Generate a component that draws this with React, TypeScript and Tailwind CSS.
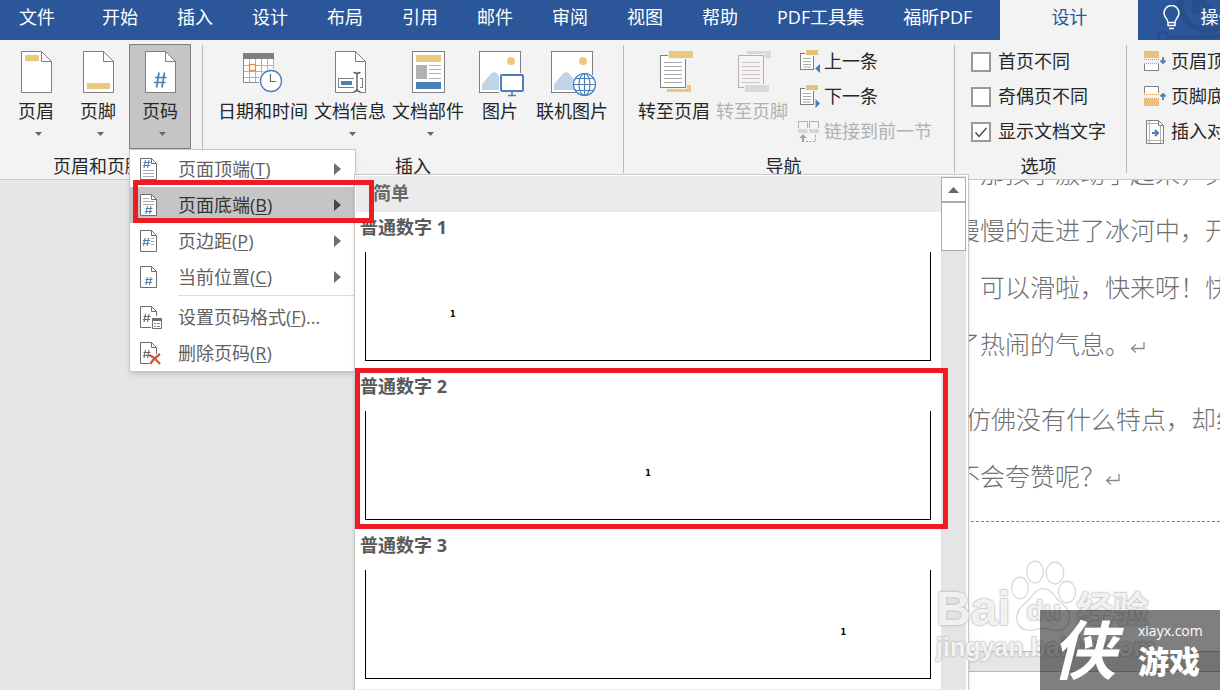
import type { ReactNode } from "react";
import clsx from "clsx";

const tabs = ["开始", "插入", "设计", "布局", "引用", "邮件", "审阅", "视图", "帮助", "PDF工具集", "福昕PDF"];

const documentLines = [
  { text: "那孩子激动了起来，头也不回", className: "pl-[25px] -mt-[34px]" },
  { text: "慢慢的走进了冰河中，开始滑" },
  { text: "可以滑啦，快来呀！快来", className: "pl-[25px]" },
  { text: "了热闹的气息。", className: "mb-[18px]", end: true },
  { text: "仿佛没有什么特点，却给人", className: "pl-[11px]" },
  { text: "不会夸赞呢？", end: true },
];

const galleryItems = [
  { title: "普通数字 1", align: "text-left" },
  { title: "普通数字 2", align: "text-center", marked: true },
  { title: "普通数字 3", align: "text-right" },
];

/* ---------- Icons ---------- */

function PageIcon({ children }: { children?: ReactNode }) {
  return (
    <svg width="31" height="42" viewBox="0 0 31 42" fill="none">
      <path d="M.5 .5H20.5L30.5 10.5V41.5H.5Z" fill="#fff" stroke="#7f7f7f" />
      <path d="M20.5 .5V10.5H30.5" stroke="#7f7f7f" />
      {children}
    </svg>
  );
}

const HeaderIcon = () => (
  <PageIcon>
    <rect x="4" y="4" width="14" height="6" fill="#ecc77e" />
  </PageIcon>
);

const FooterIcon = () => (
  <PageIcon>
    <rect x="4" y="32" width="23" height="6" fill="#ecc77e" />
  </PageIcon>
);

const PageNumberIcon = () => (
  <PageIcon>
    <path d="M14 21.5L11.500 36.500M19.500 21.5L17 36.500M10 26.500H21.500M9 31.500H20.500" stroke="#4a7fb9" strokeWidth="1.700" />
  </PageIcon>
);

const DateTimeIcon = () => (
  <svg width="40" height="42" viewBox="0 0 40 42" fill="none">
    <path d="M.5 3.500H30.500V32.500H.5Z" fill="#fff" />
    <path d="M6.500 8V32M12.500 8V32M18.500 8V32M24.500 8V32M30.500 8V32M0 14.500H31M0 20.500H31M0 26.500H31M0 31.500H18" stroke="#b1b1b1" />
    <path d="M.5 8V31.500H18" stroke="#8a8a8a" />
    <rect y="2" width="31" height="6" fill="#7f7f7f" />
    <rect x="6.500" y="13.500" width="6" height="6" fill="#fff" stroke="#e28a44" strokeWidth="1.200" />
    <circle cx="28" cy="30" r="12.500" fill="#f3f3f3" />
    <circle cx="28" cy="30" r="10.500" fill="#fff" stroke="#4a7fb9" strokeWidth="1.300" />
    <path d="M27.500 23V30.500H33" stroke="#6a6a6a" strokeWidth="1.200" />
  </svg>
);

const DocInfoIcon = () => (
  <PageIcon>
    <rect x="3.500" y="27.500" width="24" height="9" fill="#fff" stroke="#7f7f7f" />
    <rect x="6" y="30" width="11" height="4" fill="#4a7fb9" />
    <path d="M22 21V42" stroke="#fff" strokeWidth="6" />
    <path d="M18.500 21.500Q22 21.500 22 24V38Q22 40.500 18.500 41M25.500 21.500Q22 21.500 22 24M22 38Q22 40.500 25.500 41" stroke="#555" strokeWidth="1.300" />
  </PageIcon>
);

const QuickPartsIcon = () => (
  <svg width="33" height="42" viewBox="0 0 33 42" fill="none">
    <rect x=".5" y=".5" width="32" height="41" fill="#fff" stroke="#7f7f7f" />
    <rect x="4" y="4" width="25" height="7" fill="#ecc77e" />
    <rect x="4" y="14" width="11" height="14" fill="#b1b1b1" />
    <path d="M17 14.500H29M17 18.500H29M17 22.500H29M17 27.500H29" stroke="#b1b1b1" />
    <rect x="4" y="31" width="25" height="7" fill="#4a7fb9" />
  </svg>
);

function PictureBase({ children }: { children: ReactNode }) {
  return (
    <svg width="50" height="46" viewBox="-4 0 50 46" fill="none">
      <rect x=".5" y=".5" width="41" height="41" fill="#fff" stroke="#7f7f7f" />
      <circle cx="32" cy="10" r="4" fill="#ecc77e" />
      <path d="M3 39V33L12 22.500Q15 20 18 22.500L32 39Z" fill="#c0d4e8" />
      {children}
    </svg>
  );
}

const PictureIcon = () => (
  <PictureBase>
    <path d="M20 22H46V46H20Z" fill="#f3f3f3" />
    <path d="M20 22H41V41H20Z" fill="#fff" />
    <rect x="22" y="24" width="22" height="16" rx="1" fill="#fff" stroke="#4a7fb9" strokeWidth="2" />
    <path d="M33 41V44M29 44.500H37" stroke="#4a7fb9" strokeWidth="1.500" />
  </PictureBase>
);

const OnlinePictureIcon = () => (
  <PictureBase>
    <circle cx="34" cy="33.500" r="12" fill="#f3f3f3" />
    <g stroke="#4a7fb9" strokeWidth="1.200">
      <circle cx="33.500" cy="33.500" r="11" fill="#fff" />
      <ellipse cx="33.500" cy="33.500" rx="5.500" ry="11" />
      <path d="M33.500 22.500V44.500M22.500 33.500H44.500M24.500 27.500H42.500M24.500 39.500H42.500" />
    </g>
  </PictureBase>
);

const GoToHeaderIcon = () => (
  <svg width="37" height="42" viewBox="-4 0 37 42" fill="none">
    <rect x="7" y="34" width="24" height="7" fill="#ecc77e" />
    <path d="M-1 4H27V38H-1Z" fill="#f3f3f3" />
    <rect x=".5" y="4.500" width="25" height="32" fill="#fff" stroke="#7f7f7f" />
    <path d="M4 11.500H22M4 15.500H22M4 19.500H22M4 23.500H22M4 27.500H22M4 31.500H22" stroke="#a9a9a9" />
    <path d="M8 0H33V8H8Z" fill="#f3f3f3" />
    <rect x="9" width="24" height="7" fill="#ecc77e" />
  </svg>
);

const GoToFooterIcon = () => (
  <svg width="37" height="42" viewBox="-4 0 37 42" fill="none">
    <rect x="9" width="24" height="7" fill="#dbd7da" />
    <path d="M-1 3H27V38H-1Z" fill="#f3f3f3" />
    <rect x=".5" y="4.500" width="25" height="32" fill="#f6f2f8" stroke="#b1b1b1" />
    <path d="M4 11.500H22M4 15.500H22M4 19.500H22M4 23.500H22M4 27.500H22M4 31.500H22" stroke="#c8c4c8" />
    <path d="M6 33H33V42H6Z" fill="#f3f3f3" />
    <rect x="7" y="34" width="24" height="7" fill="#dbd7da" />
  </svg>
);

function StepIcon({ forward = false }: { forward?: boolean }) {
  return (
    <svg width="23" height="23" viewBox="-3 0 23 23" fill="none">
      <rect x=".5" y="3.500" width="13" height="16" fill="#fff" stroke="#7f7f7f" />
      <path d="M3 8.500H11M3 11.500H11M3 14.500H11M3 17H11" stroke="#a9a9a9" />
      <path d="M5 0H19V6H5Z" fill="#f3f3f3" />
      <rect x="6" width="12" height="5" fill="#e8c27c" />
      <path d={forward ? "M15.500 14V23L20 18.500Z" : "M20 14V23L15 18.500Z"} fill="#4a7fb9" />
    </svg>
  );
}

const LinkPreviousIcon = () => (
  <svg width="23" height="23" viewBox="0 0 23 23" fill="none">
    <path d="M1.500 8V1.500H10.500V8M12.500 8V1.500H21.500V8" fill="#f6f2f8" stroke="#b1b1b1" />
    <path d="M1 9H10.500V13H1ZM12 9H22V13H12Z" fill="#d9d5d9" />
    <path d="M6 14L9.500 18H7V22H5V18H2.500Z" fill="#a0a0a0" />
    <path d="M9 21.500H18.500V14" stroke="#a0a0a0" strokeDasharray="2 1.500" />
  </svg>
);

function EdgeDistanceIcon({ footer = false }: { footer?: boolean }) {
  return (
    <svg width="23" height="21" viewBox="0 0 23 21" fill="none">
      {footer ? (
        <>
          <path d="M.5 7V.5H14.500V7" fill="#fff" stroke="#7f7f7f" />
          <rect y="13" width="15" height="7" fill="#e8c27c" />
        </>
      ) : (
        <>
          <rect width="15" height="7" fill="#e8c27c" />
          <path d="M.5 13V19.500H14.500V13" fill="#fff" stroke="#7f7f7f" />
        </>
      )}
      <path d="M0 8.500H15M0 12.500H15" stroke="#d9a25a" strokeDasharray="1 1" />
      <path d={footer ? "M19 14V8M16.500 10.500L19 8L21.500 10.500" : "M19 6V12M16.500 9.500L19 12L21.500 9.500"} stroke="#4a7fb9" strokeWidth="1.800" />
    </svg>
  );
}

const AlignmentTabIcon = () => (
  <svg width="23" height="24" viewBox="-2 0 23 24" fill="none">
    <path d="M.5 .5H12.500L17.500 5.500V23.500H.5Z" fill="#fff" stroke="#7f7f7f" />
    <path d="M12.500 .5V5.500H17.500" stroke="#7f7f7f" />
    <path d="M3.500 1V23M14.500 6V23M1 3.500H12M1 20.500H17" stroke="#b1b1b1" />
    <path d="M6 13H12M9 10L12 13L9 16" stroke="#4a7fb9" strokeWidth="2" />
  </svg>
);

const hashPath = "M2.500 0L1 8M6 0L4.500 8M.5 2.500H7.500M0 5.500H7";

function MenuPageIcon({ hash, color = "#4a7fb9", children }: { hash: string; color?: string; children?: ReactNode }) {
  return (
    <svg width="23" height="24" viewBox="0 0 23 24" fill="none">
      <path d="M.5 .5H11.500L16.500 5.500V21.500H.5Z" fill="#fff" stroke="#6e6e6e" />
      <path d="M11.500 .5V5.500H16.500" stroke="#6e6e6e" />
      <path d={hashPath} transform={hash} stroke={color} strokeWidth="1.100" />
      {children}
    </svg>
  );
}

const TopOfPageIcon = () => (
  <MenuPageIcon hash="translate(3 2)">
    <path d="M3 12.500H14M3 15.500H14M3 18.500H14" stroke="#a9a9a9" />
  </MenuPageIcon>
);

const BottomOfPageIcon = () => (
  <MenuPageIcon hash="translate(5 12)">
    <path d="M3 4.500H9M3 7.500H14M3 10.500H14" stroke="#a9a9a9" />
  </MenuPageIcon>
);

const MarginsIcon = () => (
  <MenuPageIcon hash="translate(2.500 8)">
    <path d="M11 8.500H14M11 11.500H14M11 14.500H14" stroke="#a9a9a9" />
  </MenuPageIcon>
);

const CurrentPositionIcon = () => <MenuPageIcon hash="translate(5 11)" />;

const FormatIcon = () => (
  <MenuPageIcon hash="translate(3 8)" color="#666">
    <path d="M11 10H22V24H11Z" fill="#fff" />
    <path d="M12.500 12.500H21.500V22.500H12.500Z" stroke="#6e6e6e" />
    <path d="M12 14H22" stroke="#6e6e6e" strokeWidth="2" />
    <path d="M14 17.500H16M17 17.500H20M14 20.500H16M17 20.500H20" stroke="#8a8a8a" />
  </MenuPageIcon>
);

const RemoveIcon = () => (
  <MenuPageIcon hash="translate(3 8)" color="#666">
    <path d="M9 12H20V23H9Z" fill="#fff" />
    <path d="M9 13Q14 15 20 22M20 12Q14 16 10 22" stroke="#d35230" strokeWidth="2.200" />
  </MenuPageIcon>
);

const DownArrow = () => (
  <svg className="mt-[6px] ml-1" width="7" height="4" viewBox="0 0 7 4" fill="#666">
    <path d="M0 0H7L3.500 4Z" />
  </svg>
);

const ParagraphMark = () => (
  <svg className="inline-block" width="15" height="12" viewBox="0 0 15 12" fill="none" stroke="#8a8a8a" strokeWidth="1.300">
    <path d="M14 0V6.500H2M6 2.500L1.500 6.500L6 10.500" />
  </svg>
);

/* ---------- Ribbon ---------- */

type RibbonButtonProps = {
  label: string;
  icon: ReactNode;
  width?: string;
  hasMenu?: boolean;
  active?: boolean;
  disabled?: boolean;
};

function RibbonButton({ label, icon, width, hasMenu, active, disabled }: RibbonButtonProps) {
  return (
    <button
      type="button"
      disabled={disabled}
      aria-expanded={active}
      className={clsx(
        "flex h-[105px] flex-col items-center border pt-[6px] whitespace-nowrap",
        width ?? "px-[2px]",
        active ? "border-[#7f7f7f] bg-[#c5c5c5]" : "border-transparent",
        disabled ? "text-[#b1b1b1]" : "text-[#262626]",
      )}
    >
      <span className="h-[45px]">{icon}</span>
      <span className="leading-[30px]">{label}</span>
      {hasMenu && <DownArrow />}
    </button>
  );
}

function RibbonRow({ label, icon, disabled }: { label: string; icon: ReactNode; disabled?: boolean }) {
  return (
    <button
      type="button"
      disabled={disabled}
      className={clsx("flex h-[35px] items-center gap-1 whitespace-nowrap", disabled ? "text-[#b1b1b1]" : "text-[#262626]")}
    >
      {icon}
      {label}
    </button>
  );
}

function RibbonCheckbox({ label, checked = false }: { label: string; checked?: boolean }) {
  return (
    <label className="flex h-[35px] items-center gap-[7px] whitespace-nowrap">
      <span className="relative flex">
        <input
          type="checkbox"
          defaultChecked={checked}
          className="peer size-5 appearance-none border-2 border-[#999] bg-white"
        />
        <svg className="pointer-events-none absolute inset-0 hidden peer-checked:block" viewBox="0 0 20 20" fill="none" stroke="#444" strokeWidth="1.400">
          <path d="M4.500 10.500L8 14.500L15.500 6" />
        </svg>
      </span>
      {label}
    </label>
  );
}

function RibbonGroup({ label, className, children }: { label?: string; className: string; children: ReactNode }) {
  return (
    <section className="flex shrink-0">
      <div className={className}>
        <div className="flex">{children}</div>
        <h2 className="h-[30px] pt-[2px] text-center leading-[30px]">{label}</h2>
      </div>
      <div className="mt-px h-[128px] w-px bg-[#b8b8b8]" />
    </section>
  );
}

/* ---------- Page number menu ---------- */

type MenuItemProps = {
  label: string;
  accessKey: string;
  suffix?: string;
  icon: ReactNode;
  hasSubmenu?: boolean;
  active?: boolean;
};

function MenuItem({ label, accessKey, suffix, icon, hasSubmenu, active }: MenuItemProps) {
  return (
    <button
      type="button"
      role="menuitem"
      className={clsx(
        "flex h-9 w-full items-center pr-[14px] pl-[10px] text-left whitespace-nowrap",
        active ? "bg-[#c5c5c5] text-[#333]" : "text-[#5f5f5f]",
      )}
    >
      <span className="w-[38px] pt-px">{icon}</span>
      <span className="flex-1">
        {label}(<u className="decoration-1 underline-offset-2">{accessKey}</u>){suffix}
      </span>
      {hasSubmenu && (
        <svg width="7" height="12" viewBox="0 0 7 12" fill={active ? "#444" : "#6e6e6e"}>
          <path d="M0 0L7 6L0 12Z" />
        </svg>
      )}
    </button>
  );
}

function PageNumberGallery() {
  return (
    <div className="absolute top-[24px] left-[224px] flex w-[615px] border border-[#c6c6c6] bg-white pt-px shadow-md">
      <div className="flex-1 pl-px">
        <h3 className="h-9 bg-[#ebebeb] pl-[17px] leading-[34px] font-bold text-[#666]">简单</h3>
        {galleryItems.map((item) => (
          <button key={item.title} type="button" className="relative block h-[159px] w-full text-left">
            <span className="block h-10 pl-1 leading-[30px] font-bold text-[#595959]">{item.title}</span>
            <span
              className={clsx(
                "mr-[10px] mb-[10px] ml-[9px] block h-[109px] border-x border-b border-black px-[84px] pt-[57px] font-['DejaVu_Sans',sans-serif] text-[8px] leading-[12px] font-bold text-black",
                item.align,
              )}
            >
              1
            </span>
            {item.marked && <span className="absolute -top-[3px] -right-[7px] -left-px z-10 h-[161px] border-5 border-[#ed1c24]" />}
          </button>
        ))}
        <div className="h-9 bg-[#ebebeb]" />
      </div>
      <div className="mr-[2px] w-[25px] bg-[#e5e5e5] pt-px">
        <button type="button" aria-label="向上滚动" className="flex h-[25px] w-full items-center justify-center border border-[#ababab] bg-white">
          <svg width="11" height="6" viewBox="0 0 11 6" fill="#666">
            <path d="M0 6L5.500 0L11 6Z" />
          </svg>
        </button>
        <div className="h-[49px] border border-[#ababab] bg-white" />
      </div>
    </div>
  );
}

function PageNumberMenu() {
  return (
    <div role="menu" className="absolute top-full left-0 w-[227px] border border-[#c6c6c6] bg-white pt-px shadow-md">
      <MenuItem label="页面顶端" accessKey="T" icon={<TopOfPageIcon />} hasSubmenu />
      <MenuItem label="页面底端" accessKey="B" icon={<BottomOfPageIcon />} hasSubmenu active />
      <MenuItem label="页边距" accessKey="P" icon={<MarginsIcon />} hasSubmenu />
      <MenuItem label="当前位置" accessKey="C" icon={<CurrentPositionIcon />} hasSubmenu />
      <div className="mb-[3px] ml-12 h-px bg-[#dcdcdc]" />
      <MenuItem label="设置页码格式" accessKey="F" suffix="..." icon={<FormatIcon />} />
      <MenuItem label="删除页码" accessKey="R" icon={<RemoveIcon />} />
      <PageNumberGallery />
      <div className="pointer-events-none absolute top-[30px] left-[3px] h-[43px] w-[241px] border-5 border-[#ed1c24]" />
    </div>
  );
}

/* ---------- Page ---------- */

function TabBar() {
  return (
    <nav className="flex h-10 bg-[#2b579a] leading-[34px] whitespace-nowrap text-white">
      <div className="flex shrink-0 gap-[39px] pr-7 pl-[19px]">
        <button type="button" className="mr-2 flex">文件</button>
        {tabs.map((tab) => (
          <button key={tab} type="button" className="flex">{tab}</button>
        ))}
      </div>
      <button type="button" className="flex w-[138px] shrink-0 justify-center bg-[#f3f3f3] text-[#2b579a]">设计</button>
      <div className="relative flex flex-1 overflow-hidden pl-[25px]">
        <svg className="absolute inset-y-0 left-0" width="82" height="40" viewBox="0 0 82 40" fill="none" stroke="#284f8c">
          <circle cx="70" cy="2" r="28" strokeWidth="6" />
          <path d="M58 -6V14M58 -6L74 14" strokeWidth="7" />
          <circle cx="25" cy="37" r="4.500" strokeWidth="3" />
          <path d="M30 37H82" strokeWidth="4" />
        </svg>
        <button type="button" className="relative flex gap-5">
          <svg className="mt-[5px]" width="17" height="25" viewBox="0 0 17 25" fill="none" stroke="#fff" strokeWidth="1.500">
            <path d="M5 17.500C5 14 1 12.500 1 8A7.500 7.500 0 0 1 16 8C16 12.500 12 14 12 17.500V20.500H5ZM5 17.500H12M6 23.500H11" />
          </svg>
          操作说明搜索
        </button>
      </div>
    </nav>
  );
}

function Watermark() {
  return (
    <div className="pointer-events-none absolute right-[62px] bottom-[27px] z-30 w-[222px] font-['Liberation_Sans','Noto_Sans_CJK_SC',sans-serif] font-bold whitespace-nowrap text-white/80 [-webkit-text-stroke:1px_#d4d4d4] [paint-order:stroke_fill] [text-shadow:0_0_3px_#b0b0b0]">
      <div className="flex h-[74px] items-end">
        <span className="text-[48px] leading-[44px]">Bai</span>
        <span className="relative flex h-[74px] w-[66px] items-end justify-center">
          <svg className="absolute inset-0" width="66" height="74" viewBox="0 0 66 74" fill="#fff" fillOpacity=".85" stroke="#cfcfcf" strokeWidth="1.800">
            <ellipse cx="9" cy="31" rx="8" ry="10.500" />
            <ellipse cx="24" cy="15" rx="8" ry="10.500" />
            <ellipse cx="44" cy="16" rx="8.500" ry="10.500" />
            <ellipse cx="56" cy="35" rx="8" ry="10.500" />
            <path d="M32 32C24 32 21 41 14 47C3 55 3 72 18 73C25 73 27 71 32 71C38 71 40 73 46 73C61 72 61 55 51 47C43 41 41 32 32 32Z" />
          </svg>
          <span className="relative text-[28px] leading-[40px]">du</span>
        </span>
        <span className="text-[36px] leading-[40px]">经验</span>
      </div>
      <div className="text-[25px] leading-[32px]">jingyan.baidu.com</div>
    </div>
  );
}

function SiteBadge() {
  return (
    <div className="absolute right-0 bottom-0 z-40 flex h-20 w-[180px] bg-black/50 pl-3 text-white">
      <span className="w-[86px] text-[64px] leading-[80px] font-bold italic">侠</span>
      <div className="pt-[10px]">
        <div className="text-[14px] leading-[22px]">xiayx.com</div>
        <div className="text-[31px] leading-[38px] font-black">游戏</div>
      </div>
    </div>
  );
}

export default function App() {
  return (
    <div className="relative flex h-screen flex-col overflow-hidden bg-[#e6e6e6] font-['Open_Sans','Noto_Sans_CJK_SC',sans-serif] text-[18px]">
      <TabBar />

      <header className="relative z-20 flex h-[140px] shrink-0 border-b border-[#c8c8c8] bg-[#f3f3f3] pt-1 text-[#262626]">
        <RibbonGroup label="页眉和页脚" className="pr-[11px] pl-[5px]">
          <RibbonButton label="页眉" icon={<HeaderIcon />} width="w-[62px]" hasMenu />
          <RibbonButton label="页脚" icon={<FooterIcon />} width="w-[62px]" hasMenu />
          <div className="relative">
            <RibbonButton label="页码" icon={<PageNumberIcon />} width="w-[62px]" hasMenu active />
            <PageNumberMenu />
          </div>
        </RibbonGroup>

        <RibbonGroup label="插入" className="px-3">
          <RibbonButton label="日期和时间" icon={<DateTimeIcon />} />
          <RibbonButton label="文档信息" icon={<DocInfoIcon />} hasMenu />
          <RibbonButton label="文档部件" icon={<QuickPartsIcon />} hasMenu />
          <RibbonButton label="图片" icon={<PictureIcon />} width="w-[66px]" />
          <RibbonButton label="联机图片" icon={<OnlinePictureIcon />} />
        </RibbonGroup>

        <RibbonGroup label="导航" className="pr-[22px] pl-[11px]">
          <RibbonButton label="转至页眉" icon={<GoToHeaderIcon />} />
          <RibbonButton label="转至页脚" icon={<GoToFooterIcon />} disabled />
          <div className="ml-[6px]">
            <RibbonRow label="上一条" icon={<StepIcon />} />
            <RibbonRow label="下一条" icon={<StepIcon forward />} />
            <RibbonRow label="链接到前一节" icon={<LinkPreviousIcon />} disabled />
          </div>
        </RibbonGroup>

        <RibbonGroup label="选项" className="pr-5 pl-4">
          <div>
            <RibbonCheckbox label="首页不同" />
            <RibbonCheckbox label="奇偶页不同" />
            <RibbonCheckbox label="显示文档文字" checked />
          </div>
        </RibbonGroup>

        <RibbonGroup className="pl-[17px]">
          <div>
            <RibbonRow label="页眉顶端距离" icon={<EdgeDistanceIcon />} />
            <RibbonRow label="页脚底端距离" icon={<EdgeDistanceIcon footer />} />
            <RibbonRow label="插入对齐制表位" icon={<AlignmentTabIcon />} />
          </div>
        </RibbonGroup>
      </header>

      <main className="flex-1 overflow-hidden pl-[700px]">
        <article className="h-[472px] overflow-hidden border-b border-[#b8b8b8] bg-white font-['Liberation_Serif','Noto_Sans_CJK_SC',serif] text-[25px] whitespace-nowrap text-[#707070]">
          <div className="flex h-[341px] flex-col pl-[255px]">
            {documentLines.map((line) => (
              <p key={line.text} className={clsx("h-[57px] shrink-0 leading-[57px] font-light", line.className)}>
                {line.text}
                {line.end && <ParagraphMark />}
              </p>
            ))}
          </div>
          <div className="border-t border-dashed border-[#7f7f7f]" />
        </article>
        <div className="mt-[19px] h-5 border-t border-[#b8b8b8] bg-white" />
      </main>

      <Watermark />
      <SiteBadge />
    </div>
  );
}
